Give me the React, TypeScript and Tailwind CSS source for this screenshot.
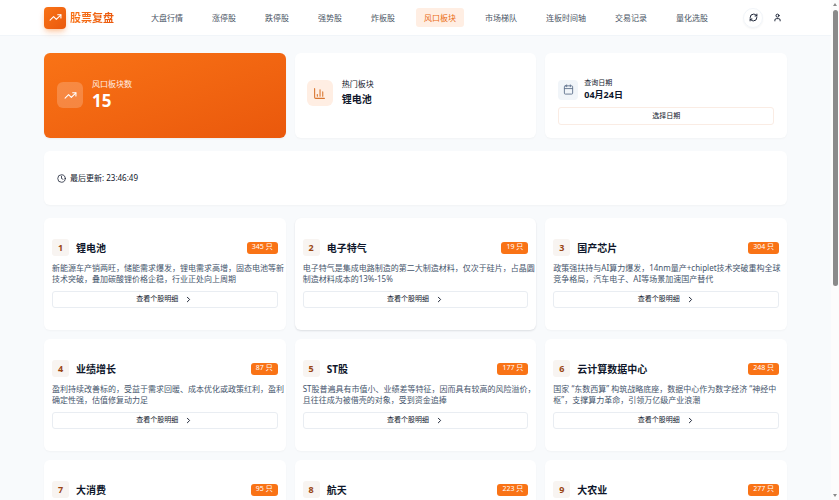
import React from "react";
import {
  Calendar,
  ChartColumn,
  ChevronRight,
  Clock,
  RefreshCw,
  TrendingUp,
  User,
} from "lucide-react";
import { clsx } from "clsx";

const NAV_ITEMS = [
  "大盘行情",
  "涨停股",
  "跌停股",
  "强势股",
  "炸板股",
  "风口板块",
  "市场梯队",
  "连板时间轴",
  "交易记录",
  "量化选股",
];

const ACTIVE_NAV = "风口板块";

type Sector = {
  name: string;
  count: number;
  desc?: string;
  raised?: boolean;
};

const SECTORS: Sector[] = [
  {
    name: "锂电池",
    count: 345,
    desc: "新能源车产销两旺，储能需求爆发，锂电需求高增，固态电池等新技术突破，叠加碳酸锂价格企稳，行业正处向上周期",
  },
  {
    name: "电子特气",
    count: 19,
    desc: "电子特气是集成电路制造的第二大制造材料，仅次于硅片，占晶圆制造材料成本的13%-15%",
    raised: true,
  },
  {
    name: "国产芯片",
    count: 304,
    desc: "政策强扶持与AI算力爆发，14nm量产+chiplet技术突破重构全球竞争格局，汽车电子、AI等场景加速国产替代",
  },
  {
    name: "业绩增长",
    count: 87,
    desc: "盈利持续改善标的，受益于需求回暖、成本优化或政策红利，盈利确定性强，估值修复动力足",
  },
  {
    name: "ST股",
    count: 177,
    desc: "ST股普遍具有市值小、业绩差等特征，因而具有较高的风险溢价，且往往成为被借壳的对象，受到资金追捧",
  },
  {
    name: "云计算数据中心",
    count: 248,
    desc: "国家 “东数西算” 构筑战略底座，数据中心作为数字经济 “神经中枢”，支撑算力革命，引领万亿级产业浪潮",
  },
  { name: "大消费", count: 95 },
  { name: "航天", count: 223 },
  { name: "大农业", count: 277 },
];

function Header() {
  return (
    <header className="flex h-9 shrink-0 items-center border-b border-slate-100 bg-white px-11">
      <a href="#" className="flex shrink-0 items-center gap-1">
        <span className="flex size-[22px] items-center justify-center rounded bg-linear-to-br from-[#f97316] to-[#ea580c] text-white shadow-md shadow-[#f97316]/30">
          <TrendingUp className="size-[13px]" />
        </span>
        <span className="bg-linear-to-r from-[#f97316] to-[#ea580c] bg-clip-text text-[11px] leading-4 font-bold text-transparent">
          股票复盘
        </span>
      </a>
      <nav className="mr-[27px] ml-[29px] flex flex-1 items-center justify-between">
        {NAV_ITEMS.map((item) => (
          <a
            key={item}
            href="#"
            className={clsx(
              "flex h-[19px] items-center rounded-[3px] px-2 text-[8px] leading-3 whitespace-nowrap",
              item === ACTIVE_NAV ? "bg-[#ffeee3] text-[#ea6a12]" : "text-gray-600"
            )}
          >
            {item}
          </a>
        ))}
      </nav>
      <div className="flex shrink-0 items-center gap-1">
        <button
          aria-label="刷新"
          className="flex size-5 items-center justify-center rounded-full border border-slate-100 text-slate-900 shadow-xs"
        >
          <RefreshCw className="size-[9px]" strokeWidth={2.5} />
        </button>
        <button aria-label="用户" className="flex size-5 items-center justify-center text-slate-900">
          <User className="size-[9px]" strokeWidth={2.5} />
        </button>
      </div>
    </header>
  );
}

function Stats() {
  return (
    <section className="grid grid-cols-3 gap-[9px]">
      <div className="rounded-md bg-linear-to-br from-[#f97316] to-[#ea580c] px-[13px] pt-[25px] pb-[13px] text-white shadow-xs">
        <div className="flex items-center gap-[9px]">
          <div className="flex size-[26px] items-center justify-center rounded-md bg-white/20">
            <TrendingUp className="size-[13px]" />
          </div>
          <div>
            <p className="text-[8px] leading-3 text-white/90">风口板块数</p>
            <p className="text-[17px] leading-[22px] font-bold">15</p>
          </div>
        </div>
      </div>

      <div className="rounded-md bg-white px-3 pt-[25px] pb-[13px] shadow-[0_1px_2px_#0f172a08]">
        <div className="flex items-center gap-[9px]">
          <div className="flex size-[26px] items-center justify-center rounded-md bg-[#ffeee3] text-[#d9762f]">
            <ChartColumn className="size-[13px]" />
          </div>
          <div>
            <p className="text-[8px] leading-3 text-slate-900">热门板块</p>
            <p className="text-[10px] leading-[18px] font-bold text-slate-900">锂电池</p>
          </div>
        </div>
      </div>

      <div className="rounded-md bg-white px-[13px] pt-[25px] pb-[13px] shadow-[0_1px_2px_#0f172a08]">
        <div className="flex items-center gap-[6px]">
          <div className="flex size-5 items-center justify-center rounded bg-slate-100 text-slate-500">
            <Calendar className="size-[11px]" />
          </div>
          <div>
            <p className="text-[7px] leading-[10px] text-slate-900">查询日期</p>
            <p className="text-[9px] leading-[13px] font-bold text-slate-900">04月24日</p>
          </div>
        </div>
        <button className="mt-[6px] flex h-[18px] w-full items-center justify-center rounded-[3px] border border-[#faece4] text-[7px] text-slate-900">
          选择日期
        </button>
      </div>
    </section>
  );
}

function SectorCard({ sector, rank }: { sector: Sector; rank: number }) {
  return (
    <article
      className={clsx(
        "rounded-md bg-white px-2 pt-[21px] pb-[22px]",
        sector.raised ? "shadow-[0_1px_2px_#0f172a1f]" : "shadow-[0_1px_2px_#0f172a08]"
      )}
    >
      <div className="flex items-center">
        <span className="flex size-[17px] items-center justify-center rounded-[3px] bg-[#f8f4f1] text-[9px] font-bold text-[#9a4512]">
          {rank}
        </span>
        <h3 className="ml-[7px] text-[10px] leading-4 font-bold text-slate-900">{sector.name}</h3>
        <span className="ml-auto flex h-3 items-center rounded-[3px] bg-[#f97316] px-[5px] text-[7px] text-white">
          {sector.count} 只
        </span>
      </div>
      <p className="mt-[6px] -mr-2 h-[22px] text-[8px] leading-[11px] text-slate-600">
        {sector.desc}
      </p>
      <button className="mt-[7px] flex h-[17px] w-full items-center justify-center gap-[6px] rounded-[3px] border border-[#e9edf2] text-[7px] text-slate-900">
        查看个股明细
        <ChevronRight className="size-[9px]" strokeWidth={2.5} />
      </button>
    </article>
  );
}

function ScrollTrack() {
  return (
    <div aria-hidden="true" className="flex w-2 shrink-0 flex-col items-center justify-between bg-[#fcfcfc] py-[3px]">
      <svg viewBox="0 0 4 3" className="w-1 fill-[#8a8a8a]">
        <path d="M2 0 4 3H0z" />
      </svg>
      <div className="mt-1 w-[5px] flex-1">
        <div className="h-[57%] rounded-full bg-[#8a8a8a]" />
      </div>
      <svg viewBox="0 0 4 3" className="w-1 fill-[#8a8a8a]">
        <path d="M0 0h4L2 3z" />
      </svg>
    </div>
  );
}

export default function App() {
  return (
    <div
      lang="zh-CN"
      className="flex h-screen overflow-hidden bg-slate-50 font-['Noto_Sans','Noto_Sans_CJK_SC',sans-serif]"
    >
      <div className="flex min-w-0 flex-1 flex-col overflow-hidden">
        <Header />
        <main className="flex flex-col gap-[13px] px-11 pt-[17px]">
          <Stats />
          <section className="flex h-[54px] items-center gap-1 rounded-md bg-white px-[13px] text-[8px] text-slate-900 shadow-[0_1px_2px_#0f172a08]">
            <Clock className="size-[9px]" />
            <span>最后更新: 23:46:49</span>
          </section>
          <section className="grid grid-cols-3 gap-[9px]">
            {SECTORS.map((sector, i) => (
              <SectorCard key={sector.name} sector={sector} rank={i + 1} />
            ))}
          </section>
        </main>
      </div>
      <ScrollTrack />
    </div>
  );
}
